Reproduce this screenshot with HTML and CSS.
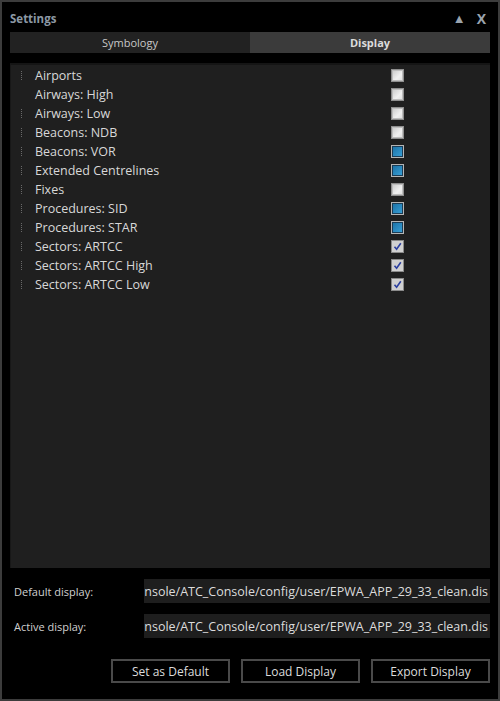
FILE: index.html
```html
<!DOCTYPE html>
<html>
<head>
<meta charset="utf-8">
<link rel="stylesheet" href="styles.css">
</head>
<body>
<div class="window">
  <div class="titlebar">
    <span class="title">Settings</span>
    <span class="controls"><span class="ctl">▲</span><span class="ctl x">X</span></span>
  </div>
  <div class="tabs">
    <div class="tab">Symbology</div>
    <div class="tab active">Display</div>
  </div>
  <div class="tree">
    <div class="row"><span class="exp"></span><span class="label">Airports</span><span class="cb off"></span></div>
    <div class="row"><span class="exp none"></span><span class="label">Airways: High</span><span class="cb off"></span></div>
    <div class="row"><span class="exp"></span><span class="label">Airways: Low</span><span class="cb off"></span></div>
    <div class="row"><span class="exp"></span><span class="label">Beacons: NDB</span><span class="cb off"></span></div>
    <div class="row"><span class="exp"></span><span class="label">Beacons: VOR</span><span class="cb part"></span></div>
    <div class="row"><span class="exp"></span><span class="label">Extended Centrelines</span><span class="cb part"></span></div>
    <div class="row"><span class="exp"></span><span class="label">Fixes</span><span class="cb off"></span></div>
    <div class="row"><span class="exp"></span><span class="label">Procedures: SID</span><span class="cb part"></span></div>
    <div class="row"><span class="exp"></span><span class="label">Procedures: STAR</span><span class="cb part"></span></div>
    <div class="row"><span class="exp"></span><span class="label">Sectors: ARTCC</span><span class="cb on"><svg viewBox="0 0 9 9" width="9" height="9"><path d="M1.5 4.8 L3.6 7.2 L7.8 1.2" fill="none" stroke="#2b3fa0" stroke-width="1.6"/></svg></span></div>
    <div class="row"><span class="exp"></span><span class="label">Sectors: ARTCC High</span><span class="cb on"><svg viewBox="0 0 9 9" width="9" height="9"><path d="M1.5 4.8 L3.6 7.2 L7.8 1.2" fill="none" stroke="#2b3fa0" stroke-width="1.6"/></svg></span></div>
    <div class="row"><span class="exp"></span><span class="label">Sectors: ARTCC Low</span><span class="cb on"><svg viewBox="0 0 9 9" width="9" height="9"><path d="M1.5 4.8 L3.6 7.2 L7.8 1.2" fill="none" stroke="#2b3fa0" stroke-width="1.6"/></svg></span></div>
  </div>
  <div class="field">
    <span class="flabel">Default display:</span>
    <div class="finput"><span>nsole/ATC_Console/config/user/EPWA_APP_29_33_clean.dis</span></div>
  </div>
  <div class="field">
    <span class="flabel">Active display:</span>
    <div class="finput"><span>nsole/ATC_Console/config/user/EPWA_APP_29_33_clean.dis</span></div>
  </div>
  <div class="buttons">
    <div class="btn">Set as Default</div>
    <div class="btn">Load Display</div>
    <div class="btn">Export Display</div>
  </div>
</div>
</body>
</html>
```
FILE: styles.css
```css
html, body {
  margin: 0;
  padding: 0;
  background: #000;
}
body {
  width: 500px;
  height: 701px;
  font-family: "Open Sans", "Noto Sans", sans-serif;
  font-size: 12px;
  color: #d4d4d4;
}
.window {
  box-sizing: border-box;
  width: 500px;
  height: 701px;
  border: 2px solid #3c3c3c;
  background: #000;
  padding: 0 8px;
  display: flex;
  flex-direction: column;
}
.titlebar {
  height: 30px;
  display: flex;
  align-items: center;
  justify-content: space-between;
}
.title {
  font-weight: bold;
  font-size: 11.5px;
  color: #8c98a4;
  padding-top: 2px;
}
.controls {
  display: flex;
  align-items: center;
  gap: 11px;
  color: #9aa4ae;
  font-weight: bold;
  padding-right: 4px;
  padding-top: 2px;
}
.ctl { font-size: 13px; }
.ctl.x { font-size: 14px; }
.tabs {
  display: flex;
  height: 21px;
}
.tab {
  flex: 1;
  background: #222;
  color: #c8c8c8;
  font-size: 11px;
  display: flex;
  align-items: center;
  justify-content: center;
}
.tab.active {
  background: #3b3b3b;
  font-weight: bold;
  color: #dcdcdc;
}
.tree {
  margin-top: 10px;
  height: 505px;
  background: #1f1f1f;
  border-top: 2px solid #151515;
  border-left: 1px solid #181818;
  padding-top: 1px;
  box-sizing: border-box;
}
.row {
  height: 19px;
  display: flex;
  align-items: center;
}
.exp {
  width: 1px;
  height: 9px;
  margin-left: 10px;
  border-left: 1px dotted #6a6a6a;
  margin-right: 12px;
}
.exp.none { border-left-color: transparent; }
.label {
  width: 356px;
  color: #d8d8d8;
  font-size: 12.5px;
}
.cb {
  box-sizing: border-box;
  width: 13px;
  height: 13px;
  border: 1px solid #8e8e8e;
  display: flex;
  align-items: center;
  justify-content: center;
}
.cb.off {
  background: linear-gradient(135deg, #c8c8c8, #f0f0f0 60%, #dcdcdc);
  box-shadow: inset 0 0 0 1px #bdbdbd;
}
.cb.part {
  border-color: #b5b5b5;
  box-shadow: inset 0 0 0 1px #1a3c55;
  background-image: linear-gradient(135deg, #1a6fa4, #3aa2d8);
}
.cb.on {
  background: #d0d0d0;
  border-color: #8a8a8a;
}
.field {
  display: flex;
  align-items: center;
  margin-top: 11px;
  height: 24px;
}
.field + .field { margin-top: 11px; }
.flabel {
  width: 130px;
  padding-left: 4px;
  font-size: 11px;
  color: #d0d0d0;
}
.finput {
  flex: 1;
  height: 24px;
  background: #1e1e1e;
  overflow: hidden;
  display: flex;
  align-items: center;
  justify-content: flex-end;
  white-space: nowrap;
  padding-right: 2px;
  color: #dcdcdc;
  font-size: 12.5px;
}
.buttons {
  display: flex;
  justify-content: flex-end;
  gap: 11px;
  margin-top: 21px;
}
.btn {
  box-sizing: border-box;
  width: 119px;
  height: 24px;
  border: 2px solid #4a4a4a;
  display: flex;
  align-items: center;
  justify-content: center;
  color: #dcdcdc;
  font-size: 12px;
}
```
